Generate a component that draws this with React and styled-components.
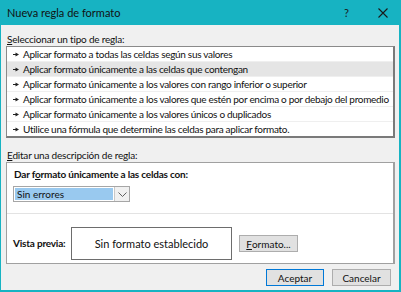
import React from "react";
import styled, { createGlobalStyle } from "styled-components";

const GlobalStyle = createGlobalStyle`
  html, body {
    margin: 0;
    padding: 0;
    background: #f0f0f0;
  }
  body {
    font-family: Lato, "Open Sans", sans-serif;
    color: #000;
  }
`;

const rules = [
  "Aplicar formato a todas las celdas según sus valores",
  "Aplicar formato únicamente a las celdas que contengan",
  "Aplicar formato únicamente a los valores con rango inferior o superior",
  "Aplicar formato únicamente a los valores que estén por encima o por debajo del promedio",
  "Aplicar formato únicamente a los valores únicos o duplicados",
  "Utilice una fórmula que determine las celdas para aplicar formato.",
];

const App = () => {
  return (
    <>
      <GlobalStyle />
      <Window>
        <TitleBar>
          <Title>Nueva regla de formato</Title>
          <TitleButtons>
            <HelpMark>?</HelpMark>
            <svg width="10" height="10" viewBox="0 0 10 10">
              <path d="M0.5 0.5 L9.5 9.5 M9.5 0.5 L0.5 9.5" stroke="#1a1a1a" strokeWidth="1.1" />
            </svg>
          </TitleButtons>
        </TitleBar>
        <Body>
          <Label>
            <u>S</u>eleccionar un tipo de regla:
          </Label>
          <RuleList>
            {rules.map((r, i) => (
              <RuleRow key={r} selected={i === 1} last={i === rules.length - 1}>
                <Arrow>
                  <svg width="6" height="5" viewBox="0 0 6 5">
                    <path d="M0 2 H2.5 V0.5 L6 2.5 L2.5 4.5 V3 H0 Z" fill="#222" />
                  </svg>
                </Arrow>
                <span>{r}</span>
              </RuleRow>
            ))}
          </RuleList>
          <Label top="10px">
            <u>E</u>ditar una descripción de regla:
          </Label>
          <DescBox>
            <DescTop>
              <BoldText>
                Dar f<u>o</u>rmato únicamente a las celdas con:
              </BoldText>
              <Select>
                <SelectValue>Sin errores</SelectValue>
                <SelectButton>
                  <svg width="9" height="5" viewBox="0 0 9 5">
                    <path d="M0.5 0.5 L4.5 4.5 L8.5 0.5" fill="none" stroke="#606060" strokeWidth="1" />
                  </svg>
                </SelectButton>
              </Select>
            </DescTop>
            <PreviewRow>
              <PreviewLabel>Vista previa:</PreviewLabel>
              <PreviewBox>Sin formato establecido</PreviewBox>
              <Button width="59px">
                <u>F</u>ormato...
              </Button>
            </PreviewRow>
          </DescBox>
          <Footer>
            <Button width="58px" primary>
              Aceptar
            </Button>
            <Button width="59px">Cancelar</Button>
          </Footer>
        </Body>
      </Window>
    </>
  );
};

export default App;

const Window = styled.div`
  width: 401px;
  height: 292px;
  box-sizing: border-box;
  border: 1px solid #17b3c2;
  border-right-width: 2px;
  border-bottom-width: 2px;
  border-top: none;
  background: #f0f0f0;
  display: flex;
  flex-direction: column;
`;

const TitleBar = styled.div`
  height: 25px;
  margin: 0 -2px 0 -1px;
  background: #17b3c2;
  display: flex;
  align-items: center;
  justify-content: space-between;
  padding: 0 13px 0 7px;
  flex-shrink: 0;
`;

const Title = styled.div`
  font-size: 11px;
  color: #111;
`;

const TitleButtons = styled.div`
  display: flex;
  align-items: center;
  gap: 29px;
`;

const HelpMark = styled.span`
  font-size: 11px;
  color: #1a1a1a;
`;

const Body = styled.div`
  flex: 1;
  padding: 0 4px 0 5px;
  display: flex;
  flex-direction: column;
`;

const Label = styled.div`
  font-size: 10px;
  letter-spacing: -0.2px;
  line-height: 14px;
  margin-top: ${({ top }) => top || "7px"};
  padding-left: 1px;
  color: #111;
`;

const RuleList = styled.div`
  background: #fff;
  border: 1px solid #8a8a8a;
  border-right: 2px solid #7a7a7a;
  border-bottom: 2px solid #7a7a7a;
  box-sizing: border-box;
  height: 92px;
  display: flex;
  flex-direction: column;
  overflow: hidden;
`;

const RuleRow = styled.div`
  flex: 1;
  box-sizing: border-box;
  display: flex;
  align-items: center;
  font-size: 10px;
  letter-spacing: -0.3px;
  white-space: nowrap;
  padding-left: 6px;
  color: #111;
  background: ${({ selected }) => (selected ? "#e5e5e5" : "#fff")};
  border-bottom: ${({ last }) => (last ? "none" : "1px solid #efefef")};
`;

const Arrow = styled.span`
  display: inline-flex;
  flex-shrink: 0;
  width: 10px;
`;

const DescBox = styled.div`
  background: #fff;
  border: 1px solid #a0a0a0;
  border-right: 2px solid #a0a0a0;
  height: 102px;
  box-sizing: border-box;
  display: flex;
  flex-direction: column;
`;

const DescTop = styled.div`
  padding: 4px 7px 0;
  height: 51px;
  box-sizing: border-box;
  border-bottom: 1px solid #e3e3e3;
  display: flex;
  flex-direction: column;
  gap: 4px;
`;

const BoldText = styled.div`
  font-size: 10px;
  font-weight: 700;
  letter-spacing: -0.2px;
  line-height: 15px;
  color: #111;
  white-space: nowrap;
`;

const PreviewLabel = styled(BoldText)`
  width: 58px;
  flex-shrink: 0;
`;

const Select = styled.div`
  width: 117px;
  height: 16px;
  box-sizing: border-box;
  border: 1px solid #a6a6a6;
  display: flex;
  background: #fff;
  margin-left: -1px;
`;

const SelectValue = styled.div`
  flex: 1;
  margin: 1px;
  background: #99c9ef;
  font-size: 10px;
  line-height: 12px;
  padding-left: 2px;
  color: #111;
`;

const SelectButton = styled.div`
  width: 14px;
  border-left: 1px solid #c8c8c8;
  background: #f0f0f0;
  display: flex;
  align-items: center;
  justify-content: center;
`;

const PreviewRow = styled.div`
  display: flex;
  align-items: center;
  padding: 13px 0 0 6px;
`;

const PreviewBox = styled.div`
  width: 161px;
  height: 33px;
  box-sizing: border-box;
  border: 1px solid #6d6d6d;
  display: flex;
  align-items: center;
  justify-content: center;
  font-size: 11px;
  color: #111;
  margin-right: 7px;
  flex-shrink: 0;
`;

const Button = styled.div`
  width: ${({ width }) => width};
  height: 17px;
  box-sizing: border-box;
  background: #e1e1e1;
  border: 1px solid ${({ primary }) => (primary ? "#0078d7" : "#adadad")};
  display: flex;
  align-items: center;
  justify-content: center;
  font-size: 10px;
  color: #111;
  flex-shrink: 0;
`;

const Footer = styled.div`
  display: flex;
  justify-content: flex-end;
  gap: 8px;
  margin-top: 5px;
  padding-right: 4px;
`;
